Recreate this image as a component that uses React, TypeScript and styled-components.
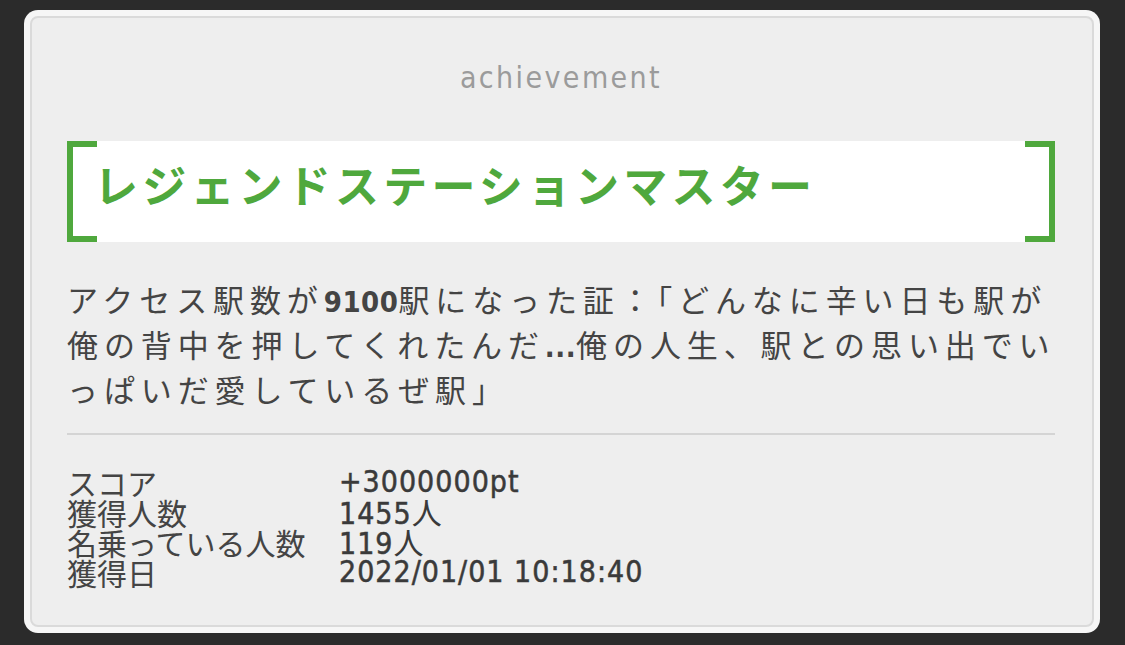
import React from 'react';
import styled, { createGlobalStyle } from 'styled-components';

const GlobalStyle = createGlobalStyle`
  html, body {
    margin: 0;
    padding: 0;
    background: #2b2b2b;
  }
  body {
    font-family: "Noto Sans CJK JP", "Noto Sans", sans-serif;
  }
`;

const numFont = `"DejaVu Sans Condensed", "Liberation Sans Narrow", "Roboto", sans-serif`;

const Page = styled.div`
  padding: 10px 0 0 24px;
  width: 1076px;
`;

const Card = styled.div`
  height: 623px;
  box-sizing: border-box;
  padding: 6px;
  border-radius: 14px;
  background: #f6f6f6;
`;

const CardInner = styled.div`
  height: 100%;
  box-sizing: border-box;
  border: 2px solid #dadada;
  border-radius: 8px;
  background: #eeeeee;
  padding: 40px 37px 0 35px;
  display: flex;
  flex-direction: column;
`;

const Kicker = styled.div`
  font-family: ${numFont};
  font-size: 30px;
  line-height: 40px;
  letter-spacing: 2.4px;
  color: #9b9b9b;
  text-align: center;
`;

const TitleBox = styled.div`
  position: relative;
  margin-top: 43px;
  height: 101px;
  box-sizing: border-box;
  background: #ffffff;
  display: flex;
  align-items: center;
  padding: 0 0 16px 27px;

  &::before,
  &::after {
    content: '';
    position: absolute;
    top: 0;
    bottom: 0;
    width: 30px;
    box-sizing: border-box;
    border: 6px solid #4fa83d;
  }
  &::before {
    left: 0;
    border-right: none;
  }
  &::after {
    right: 0;
    border-left: none;
  }
`;

const Title = styled.h2`
  margin: 0;
  font-size: 44px;
  font-weight: 700;
  letter-spacing: 4.2px;
  color: #4fa83d;
`;

const Description = styled.p`
  margin: 36px 0 0;
  font-size: 31px;
  line-height: 41px;
  letter-spacing: 5.9px;
  color: #444444;
  white-space: nowrap;
`;

const Num = styled.span`
  font-family: ${numFont};
  font-size: 29px;
  font-weight: 700;
  letter-spacing: 0.5px;
`;

const Divider = styled.hr`
  margin: 24px 0 0;
  border: none;
  height: 2px;
  background: #d4d4d4;
`;

const Stats = styled.dl`
  margin: 32px 0 0;
  display: grid;
  grid-template-columns: 272px 1fr;
  grid-auto-rows: 30px;
  align-items: center;
  font-size: 30px;
  line-height: 30px;
`;

const Label = styled.dt`
  margin: 0;
  color: #444444;
`;

const Value = styled.dd`
  margin: 0;
  color: #3a3a3a;
  font-family: ${numFont};
  font-size: 30px;
  letter-spacing: 1px;
  -webkit-text-stroke: 0.5px #3a3a3a;

  & > span {
    font-family: "Noto Sans CJK JP", sans-serif;
    letter-spacing: 0;
    -webkit-text-stroke: 0;
  }
`;

const stats: { label: string; value: string; unit?: string }[] = [
  { label: 'スコア', value: '+3000000pt' },
  { label: '獲得人数', value: '1455', unit: '人' },
  { label: '名乗っている人数', value: '119', unit: '人' },
  { label: '獲得日', value: '2022/01/01 10:18:40' },
];

export default function App() {
  return (
    <>
      <GlobalStyle />
      <Page>
        <Card>
          <CardInner>
            <Kicker>achievement</Kicker>
            <TitleBox>
              <Title>レジェンドステーションマスター</Title>
            </TitleBox>
            <Description>
              アクセス駅数が<Num>9100</Num>駅になった証：「どんなに辛い日も駅が
              <br />
              俺の背中を押してくれたんだ<Num>...</Num>俺の人生、駅との思い出でい
              <br />
              っぱいだ愛しているぜ駅」
            </Description>
            <Divider />
            <Stats>
              {stats.map((s) => (
                <React.Fragment key={s.label}>
                  <Label>{s.label}</Label>
                  <Value>
                    {s.value}
                    {s.unit && <span>{s.unit}</span>}
                  </Value>
                </React.Fragment>
              ))}
            </Stats>
          </CardInner>
        </Card>
      </Page>
    </>
  );
}
